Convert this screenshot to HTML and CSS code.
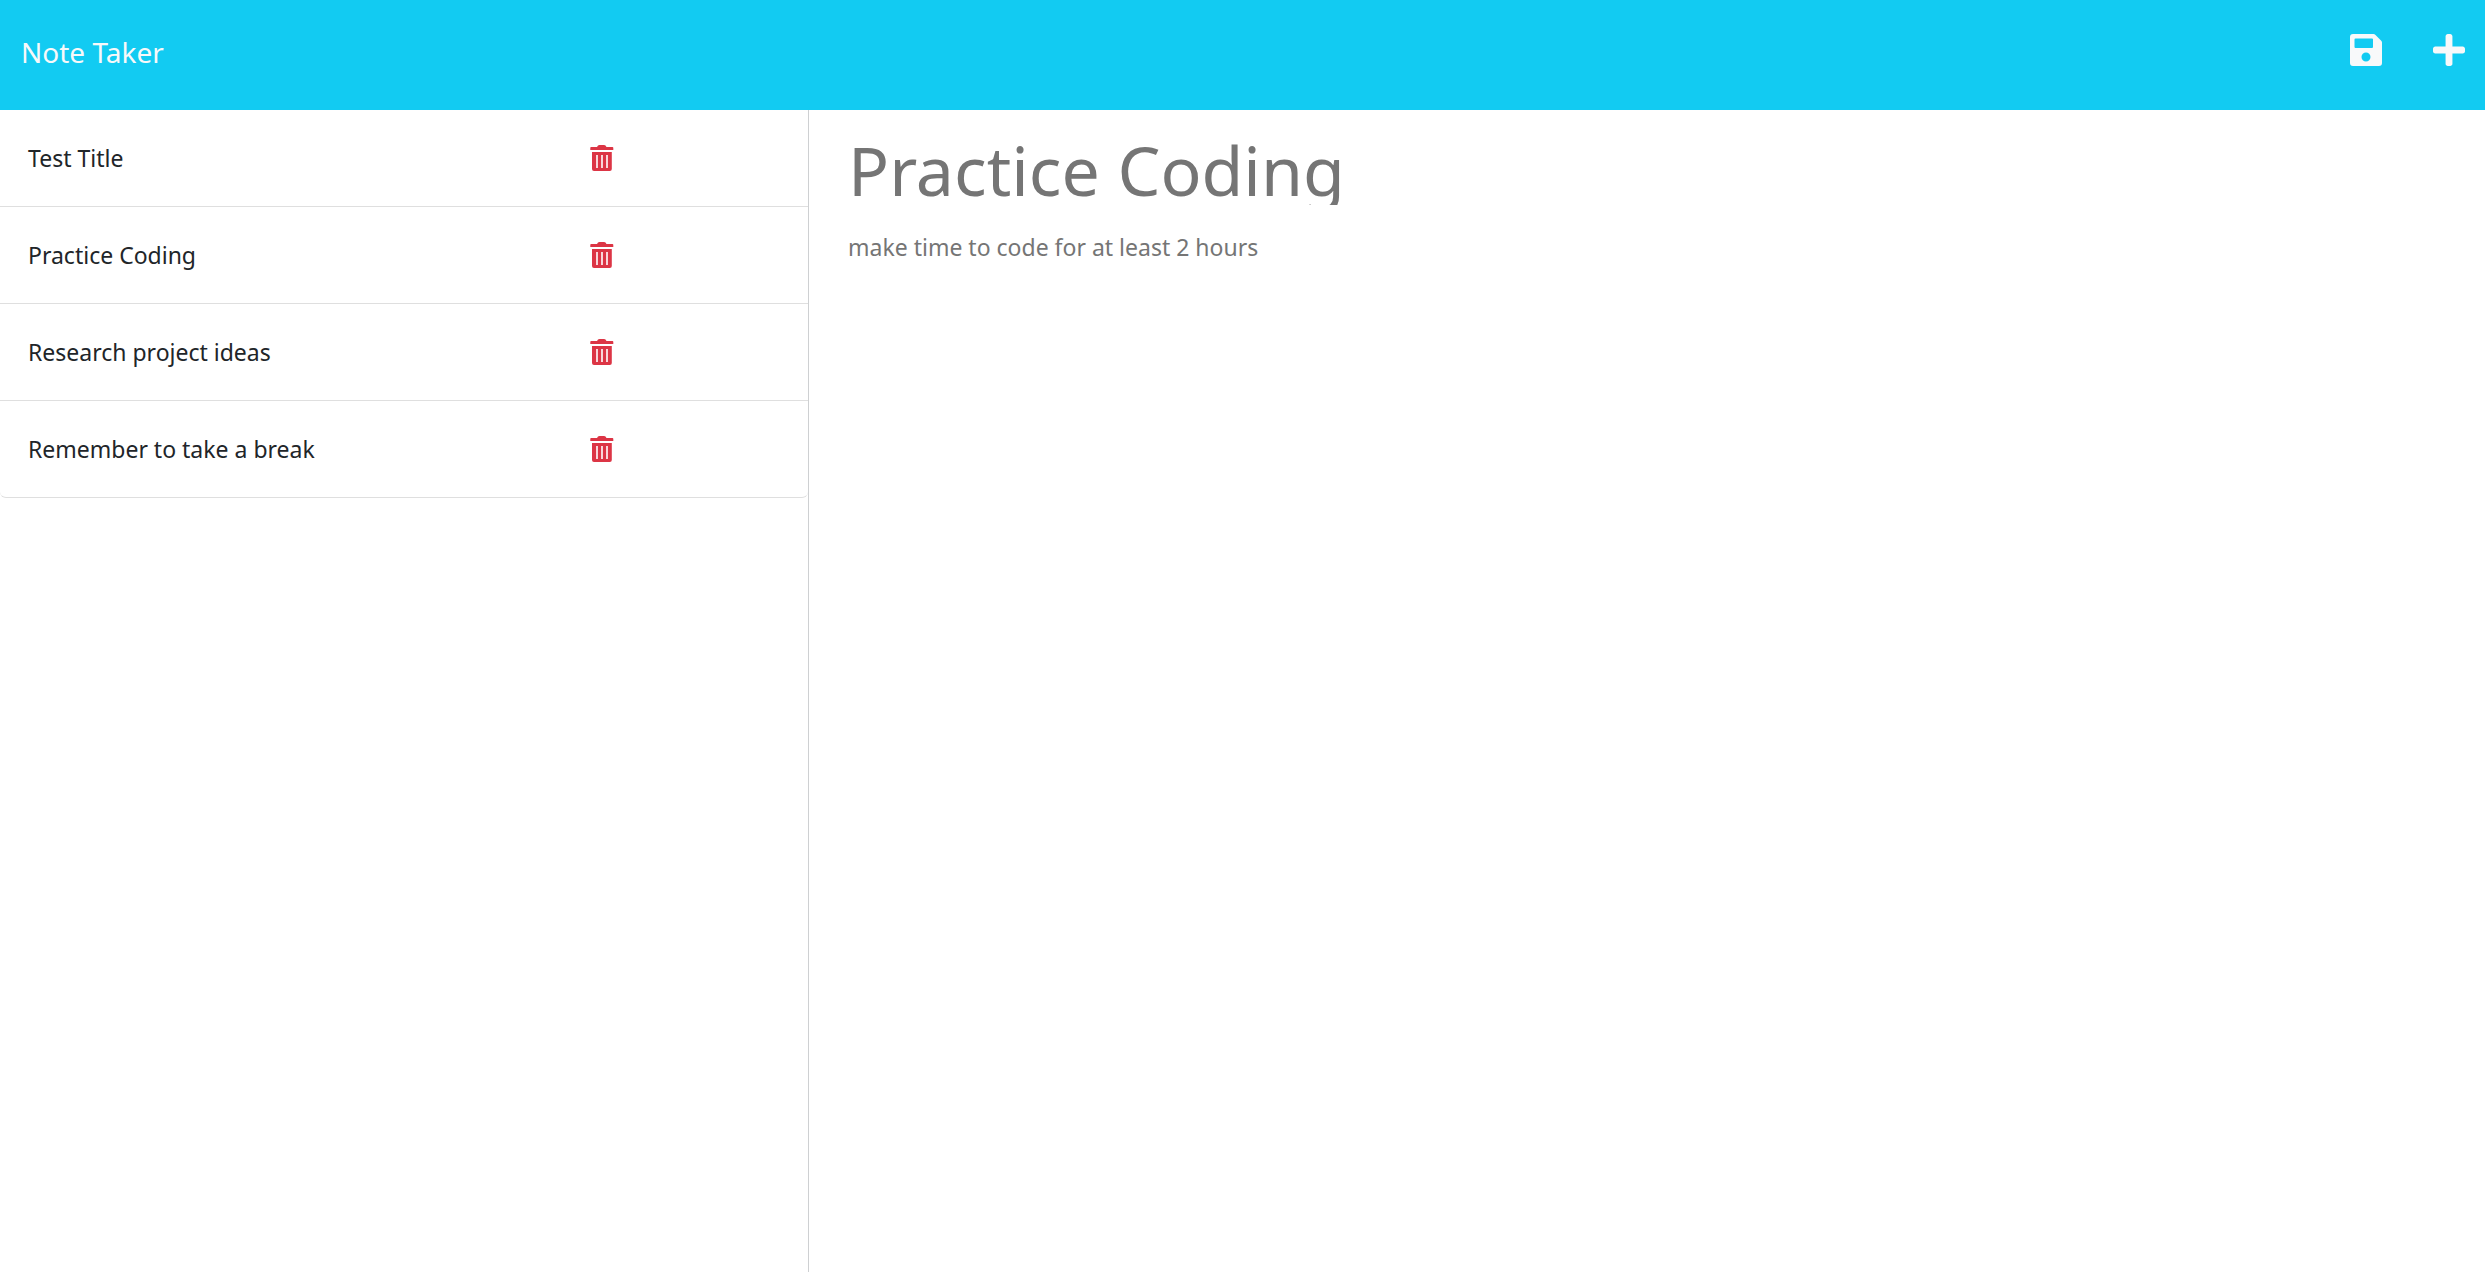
FILE: index.html
```html
<!DOCTYPE html>
<html lang="en">
<head>
<meta charset="utf-8">
<meta name="viewport" content="width=device-width, initial-scale=1">
<title>Note Taker</title>
<link rel="stylesheet" href="styles.css">
</head>
<body>
<svg class="sprite" aria-hidden="true">
  <symbol id="trash" viewBox="0 0 24 26">
    <path fill-rule="evenodd" d="M7 2L8 .5Q8.500 0 9.500 0H14Q15 0 15.500 .5L16.500 2H22.500Q23.300 2 23.300 3V5H.300V3Q.300 2 1 2ZM2 7H21.800V24Q21.800 26 19.800 26H4Q2 26 2 24ZM6.200 10V23H7.800V10ZM11.200 10V23H12.800V10ZM16.200 10V23H17.800V10Z"/>
  </symbol>
</svg>
<nav class="navbar">
  <a class="brand" href="#">Note Taker</a>
  <div class="actions">
    <button class="icon-button" type="button" aria-label="Save note">
      <svg viewBox="0 0 32 32"><path fill-rule="evenodd" d="M3 0H23.500Q24.500 0 25.500 1L31 6.500Q32 7.500 32 8.500V29Q32 32 29 32H3Q0 32 0 29V3Q0 0 3 0ZM5.500 4.500Q4.500 4.500 4.500 5.500V13Q4.500 14 5.500 14H22Q23 14 23 13V5.500Q23 4.500 22 4.500ZM16 18.500A4.500 4.500 0 1 0 16 27.500A4.500 4.500 0 1 0 16 18.500Z"/></svg>
    </button>
    <button class="icon-button" type="button" aria-label="New note">
      <svg viewBox="0 32 448 448"><path d="M416 208H272V64c0-17.670-14.330-32-32-32h-32c-17.670 0-32 14.330-32 32v144H32c-17.670 0-32 14.330-32 32v32c0 17.670 14.330 32 32 32h144v144c0 17.670 14.330 32 32 32h32c17.670 0 32-14.330 32-32V304h144c17.670 0 32-14.330 32-32v-32c0-17.670-14.330-32-32-32z"/></svg>
    </button>
  </div>
</nav>
<main class="layout">
  <aside class="sidebar">
    <ul class="notes">
      <li class="note"><span class="note-title">Test Title</span><button class="delete" type="button" aria-label="Delete Test Title"><svg><use href="#trash"/></svg></button></li>
      <li class="note"><span class="note-title">Practice Coding</span><button class="delete" type="button" aria-label="Delete Practice Coding"><svg><use href="#trash"/></svg></button></li>
      <li class="note"><span class="note-title">Research project ideas</span><button class="delete" type="button" aria-label="Delete Research project ideas"><svg><use href="#trash"/></svg></button></li>
      <li class="note"><span class="note-title">Remember to take a break</span><button class="delete" type="button" aria-label="Delete Remember to take a break"><svg><use href="#trash"/></svg></button></li>
    </ul>
  </aside>
  <section class="editor">
    <input class="title-input" type="text" placeholder="Practice Coding" aria-label="Note title">
    <textarea class="text-input" placeholder="make time to code for at least 2 hours" aria-label="Note text"></textarea>
  </section>
</main>
</body>
</html>
```
FILE: styles.css
```css
* {
  box-sizing: border-box;
}

body {
  margin: 0;
  min-height: 100vh;
  display: flex;
  flex-direction: column;
  background: #fff;
  color: #212529;
  font-family: "Segoe UI", "Noto Sans", sans-serif;
  font-size: 23px;
  line-height: 36px;
}

button {
  border: 0;
  padding: 0;
  background: none;
  cursor: pointer;
}

svg {
  display: block;
  fill: currentColor;
}

.sprite {
  display: none;
}

.navbar {
  display: flex;
  align-items: flex-start;
  justify-content: space-between;
  height: 110px;
  padding: 30px 20px 0 21px;
  background: #12cbf2;
}

.brand {
  color: #f8f9fa;
  font-size: 28px;
  line-height: 44px;
  text-decoration: none;
}

.actions {
  display: flex;
  gap: 51px;
  padding-top: 4px;
}

.icon-button {
  color: #f8f9fa;
}

.icon-button svg {
  width: 32px;
  height: 32px;
}

.layout {
  flex: 1;
  display: grid;
  grid-template-columns: minmax(0, 809fr) minmax(0, 1676fr);
}

.sidebar {
  border-right: 1px solid #ced0d2;
}

.notes {
  list-style: none;
  margin: 0;
  padding: 0;
}

.note {
  display: flex;
  align-items: center;
  height: 97px;
  padding: 0 24px 0 28px;
  border-bottom: 1px solid #dfdfdf;
}

.note:last-child {
  border-radius: 0 0 6px 6px;
}

.note-title {
  flex: 0 0 562px;
}

.delete {
  color: #dc3545;
}

.delete svg {
  width: 24px;
  height: 26px;
}

.editor {
  display: flex;
  flex-direction: column;
  padding: 25px 39px;
}

.title-input,
.text-input {
  width: 100%;
  border: 0;
  padding: 0;
  outline: 0;
  background: none;
  color: #212529;
  font-family: inherit;
}

.title-input {
  height: 70px;
  font-size: 68px;
  line-height: 70px;
}

.text-input {
  flex: 1;
  margin-top: 24px;
  font-size: 23px;
  line-height: 36px;
  resize: none;
}

::placeholder {
  color: #757575;
  opacity: 1;
}
```
